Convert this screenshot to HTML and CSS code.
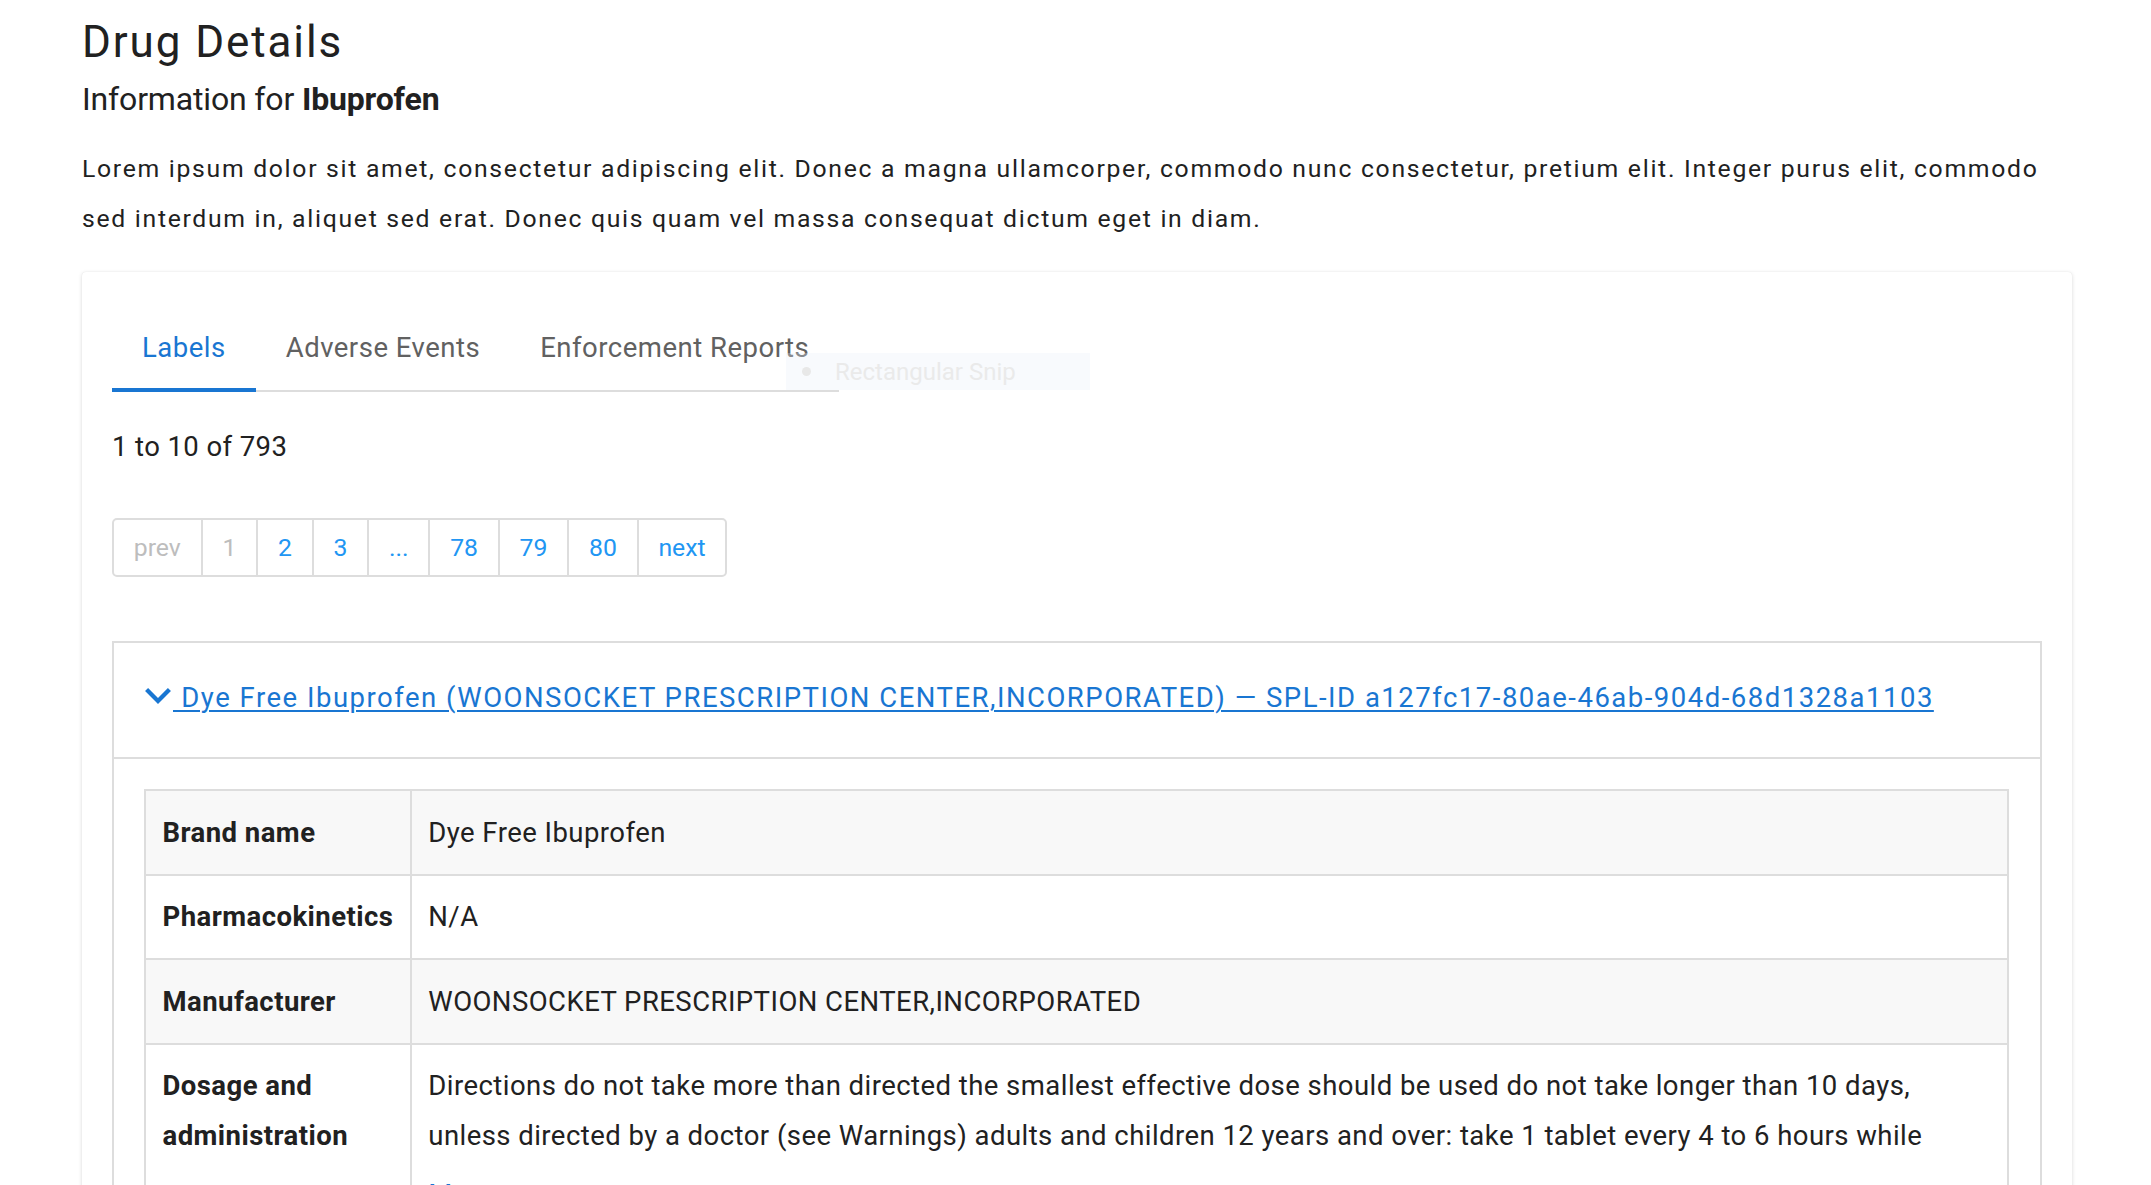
FILE: index.html
```html
<!DOCTYPE html>
<html lang="en">
<head>
<meta charset="utf-8">
<title>Drug Details</title>
<link rel="stylesheet" href="styles.css">
</head>
<body>
<div class="page">
  <h1 class="title">Drug Details</h1>
  <h2 class="subtitle">Information for <strong>Ibuprofen</strong></h2>
  <p class="intro">Lorem ipsum dolor sit amet, consectetur adipiscing elit. Donec a magna ullamcorper, commodo nunc consectetur, pretium elit. Integer purus elit, commodo sed interdum in, aliquet sed erat. Donec quis quam vel massa consequat dictum eget in diam.</p>

  <section class="card">
    <div class="tabs">
      <div class="tab tab-active">Labels</div>
      <div class="tab">Adverse Events</div>
      <div class="tab">Enforcement Reports</div>
    </div>

    <div class="snip"><span class="snip-dot"></span>Rectangular Snip</div>

    <div class="count">1 to 10 of 793</div>

    <ul class="pager">
      <li class="pager-item disabled">prev</li>
      <li class="pager-item disabled">1</li>
      <li class="pager-item">2</li>
      <li class="pager-item">3</li>
      <li class="pager-item">...</li>
      <li class="pager-item">78</li>
      <li class="pager-item">79</li>
      <li class="pager-item">80</li>
      <li class="pager-item">next</li>
    </ul>

    <div class="panel">
      <div class="panel-header">
        <a class="panel-link" href="#"><svg class="chevron" width="26" height="16" viewBox="6 8.59 12 7.41" aria-hidden="true"><path d="M16.59 8.59L12 13.17 7.41 8.59 6 10l6 6 6-6z" fill="#1976d2"/></svg> Dye Free Ibuprofen (WOONSOCKET PRESCRIPTION CENTER,INCORPORATED) — SPL-ID a127fc17-80ae-46ab-904d-68d1328a1103</a>
      </div>
      <div class="panel-body">
        <table class="details">
          <tr>
            <th>Brand name</th>
            <td>Dye Free Ibuprofen</td>
          </tr>
          <tr>
            <th>Pharmacokinetics</th>
            <td>N/A</td>
          </tr>
          <tr>
            <th>Manufacturer</th>
            <td>WOONSOCKET PRESCRIPTION CENTER,INCORPORATED</td>
          </tr>
          <tr>
            <th>Dosage and administration</th>
            <td>
              <div>Directions do not take more than directed the smallest effective dose should be used do not take longer than 10 days, unless directed by a doctor (see Warnings) adults and children 12 years and over: take 1 tablet every 4 to 6 hours while</div>
              <a class="more" href="#">More</a>
            </td>
          </tr>
        </table>
      </div>
    </div>
  </section>
</div>
</body>
</html>
```
FILE: styles.css
```css
html {
  scrollbar-width: none;
}

body {
  margin: 0;
  background: #ffffff;
  color: #212121;
  font-family: Roboto, "Liberation Sans", Arial, sans-serif;
}

.page {
  padding: 16px 79px 0 82px;
}

.title {
  margin: 0;
  font-size: 44px;
  line-height: 52px;
  font-weight: 400;
  letter-spacing: 1.9px;
}

.subtitle {
  margin: 11px 0 0;
  font-size: 32px;
  line-height: 40px;
  font-weight: 400;
  letter-spacing: -0.15px;
}

.subtitle strong {
  font-weight: 700;
}

.intro {
  margin: 24.5px 0 0;
  font-size: 24.75px;
  line-height: 50px;
  letter-spacing: 1.7px;
}

.card {
  position: relative;
  margin-top: 28.5px;
  padding: 30px 30px 40px;
  background: #fff;
  border-radius: 4px;
  box-shadow: 0 1px 4px rgba(0, 0, 0, 0.14), 0 0 1px rgba(0, 0, 0, 0.1);
}

.tabs {
  display: inline-flex;
  border-bottom: 2px solid #dddddd;
}

.tab {
  padding: 24.75px 30px 20px;
  margin-bottom: -2px;
  font-size: 27.5px;
  line-height: 41.25px;
  letter-spacing: 0.5px;
  color: #616161;
  border-bottom: 4px solid transparent;
}

.tab-active {
  color: #1976d2;
  border-bottom-color: #1976d2;
}

.snip {
  position: absolute;
  left: 704px;
  top: 81px;
  width: 304px;
  height: 37px;
  display: flex;
  align-items: center;
  gap: 24px;
  padding-left: 16px;
  box-sizing: border-box;
  background: rgba(232, 240, 248, 0.3);
  color: #eaeaea;
  font-size: 24px;
}

.snip-dot {
  width: 9px;
  height: 9px;
  border-radius: 50%;
  background: #e8e8e8;
}

.count {
  margin-top: 34px;
  font-size: 27.5px;
  line-height: 41.25px;
  letter-spacing: 0.4px;
}

.pager {
  display: inline-flex;
  margin: 50.75px 0 0;
  padding: 0;
  list-style: none;
  border: 2px solid #dddddd;
  border-radius: 5px;
}

.pager-item {
  padding: 9px 19.8px;
  font-size: 24.75px;
  line-height: 37px;
  color: #2196f3;
}

.pager-item + .pager-item {
  border-left: 2px solid #dddddd;
}

.pager-item.disabled {
  color: #bdbdbd;
}

.panel {
  margin-top: 64px;
  border: 2px solid #dddddd;
}

.panel-header {
  padding: 34px 30px 38.75px 31px;
  border-bottom: 2px solid #dddddd;
  font-size: 27.5px;
  line-height: 41.25px;
}

.panel-link {
  color: #1976d2;
  letter-spacing: 1.5px;
  text-decoration: underline;
  text-decoration-thickness: 2px;
  text-underline-offset: 3px;
}

.chevron {
  vertical-align: 3px;
  margin-right: 2px;
}

.panel-body {
  padding: 30px 31px 30px 30px;
}

.details {
  width: 100%;
  border-collapse: collapse;
  border: 2px solid #dddddd;
  font-size: 27.5px;
  line-height: 49.5px;
  letter-spacing: 0.45px;
}

.details tr:nth-child(odd) {
  background: #f8f8f8;
}

.details th,
.details td {
  padding: 16.5px;
  border: 2px solid #dddddd;
  text-align: left;
  vertical-align: top;
}

.details th {
  width: 1%;
  font-weight: 700;
}

.details td {
  font-weight: 400;
}

.more {
  display: block;
  margin-top: 10px;
  color: #1976d2;
  text-decoration: none;
}
```
